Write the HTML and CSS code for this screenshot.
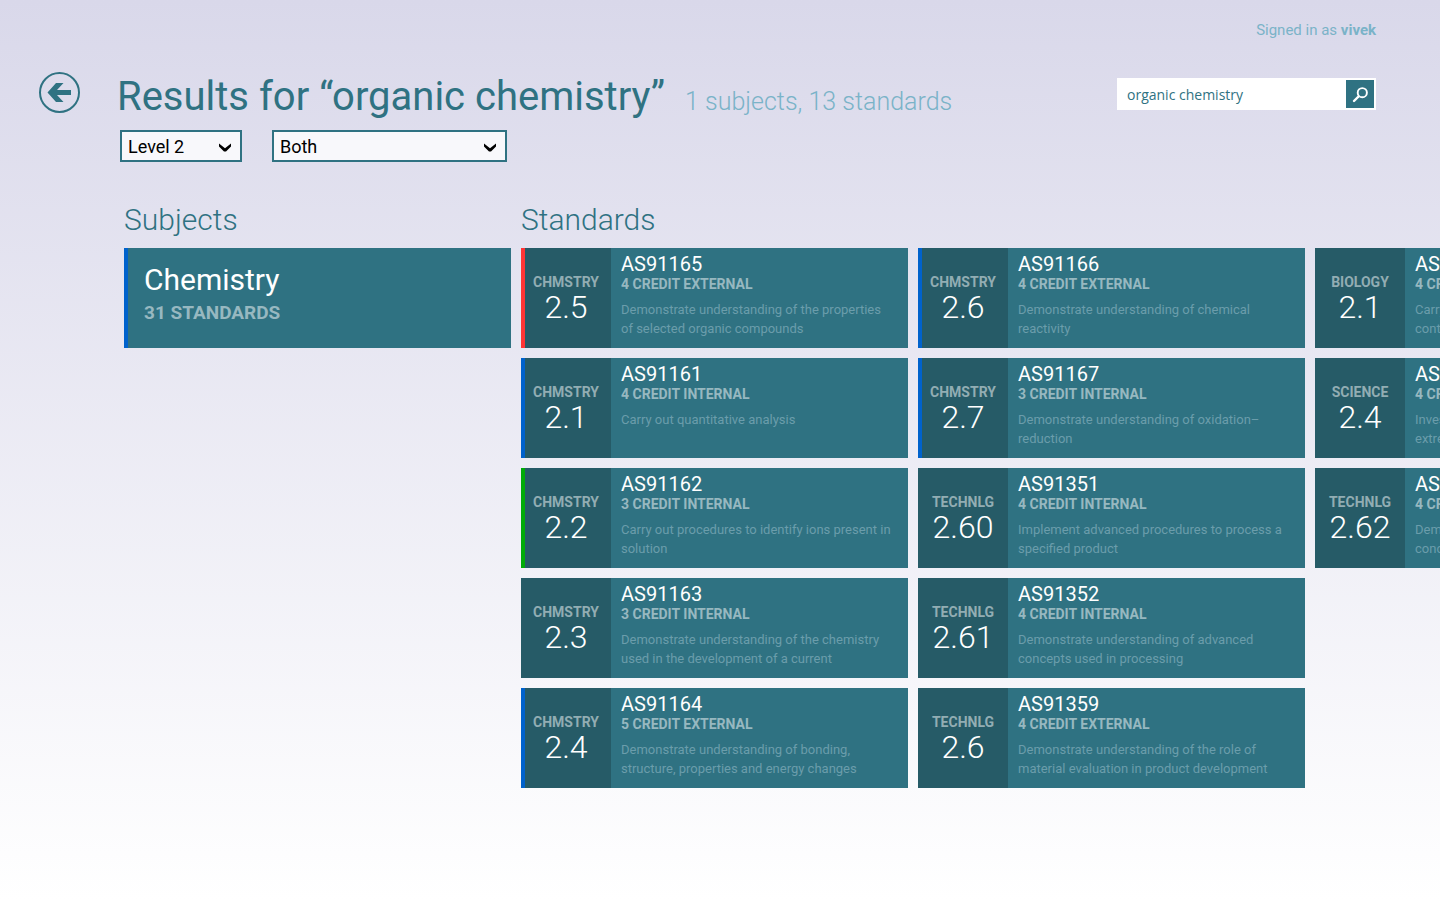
FILE: index.html
```html
<!DOCTYPE html>
<html lang="en">
<head>
<meta charset="utf-8">
<title>Results for “organic chemistry”</title>
<link rel="stylesheet" href="styles.css">
</head>
<body>
<p class="account">Signed in as <strong>vivek</strong></p>
<header class="header">
  <a class="back" href="#" aria-label="Back">
    <svg viewBox="0 0 41 41" width="41" height="41" aria-hidden="true">
      <circle cx="20.500" cy="20.500" r="19.500" fill="none" stroke="currentColor" stroke-width="2"/>
      <path d="M8.500 20.500 17 11h7.500l-6.500 7h14v5H18l6.500 7H17z" fill="currentColor"/>
    </svg>
  </a>
  <h1 class="title">Results for “organic chemistry”</h1>
  <p class="summary">1 subjects, 13 standards</p>
  <form class="search" role="search">
    <input class="search-input" type="text" aria-label="Search" value="organic chemistry">
    <button class="search-button" type="submit" aria-label="Search">
      <svg viewBox="0 0 28 28" width="28" height="28" fill="none" stroke="currentColor" aria-hidden="true">
        <circle cx="16.300" cy="12.700" r="4.600" stroke-width="1.900"/>
        <path d="M12.500 16.500 8 21" stroke-width="2.400" stroke-linecap="round"/>
      </svg>
    </button>
  </form>
</header>
<div class="filters">
  <div class="select select-level">
    <select aria-label="Level"><option>Level 1</option><option selected>Level 2</option><option>Level 3</option></select>
    <svg class="chevron" viewBox="0 0 12 9" width="12" height="9" aria-hidden="true"><path d="M0 0.500 6 5.200 12 0.500V3.500L7 8.500H5L0 3.500z"/></svg>
  </div>
  <div class="select select-type">
    <select aria-label="Assessment"><option selected>Both</option><option>Internal</option><option>External</option></select>
    <svg class="chevron" viewBox="0 0 12 9" width="12" height="9" aria-hidden="true"><path d="M0 0.500 6 5.200 12 0.500V3.500L7 8.500H5L0 3.500z"/></svg>
  </div>
</div>
<main class="results">
  <section class="group">
    <h2 class="group-title">Subjects</h2>
    <div class="tiles">
      <a class="tile subject blue" href="#"><span class="subject-name">Chemistry</span><span class="subject-count">31 STANDARDS</span></a>
    </div>
  </section>
  <section class="group">
    <h2 class="group-title">Standards</h2>
    <div class="tiles">
      <a class="tile red" href="#"><span class="code"><b>CHMSTRY</b><span class="number">2.5</span></span><span class="info"><span class="name">AS91165</span><b>4 CREDIT EXTERNAL</b><span class="text">Demonstrate understanding of the properties of selected organic compounds</span></span></a>
      <a class="tile blue" href="#"><span class="code"><b>CHMSTRY</b><span class="number">2.1</span></span><span class="info"><span class="name">AS91161</span><b>4 CREDIT INTERNAL</b><span class="text">Carry out quantitative analysis</span></span></a>
      <a class="tile green" href="#"><span class="code"><b>CHMSTRY</b><span class="number">2.2</span></span><span class="info"><span class="name">AS91162</span><b>3 CREDIT INTERNAL</b><span class="text">Carry out procedures to identify ions present in solution</span></span></a>
      <a class="tile" href="#"><span class="code"><b>CHMSTRY</b><span class="number">2.3</span></span><span class="info"><span class="name">AS91163</span><b>3 CREDIT INTERNAL</b><span class="text">Demonstrate understanding of the chemistry used in the development of a current</span></span></a>
      <a class="tile blue" href="#"><span class="code"><b>CHMSTRY</b><span class="number">2.4</span></span><span class="info"><span class="name">AS91164</span><b>5 CREDIT EXTERNAL</b><span class="text">Demonstrate understanding of bonding, structure, properties and energy changes</span></span></a>
      <a class="tile blue" href="#"><span class="code"><b>CHMSTRY</b><span class="number">2.6</span></span><span class="info"><span class="name">AS91166</span><b>4 CREDIT EXTERNAL</b><span class="text">Demonstrate understanding of chemical reactivity</span></span></a>
      <a class="tile blue" href="#"><span class="code"><b>CHMSTRY</b><span class="number">2.7</span></span><span class="info"><span class="name">AS91167</span><b>3 CREDIT INTERNAL</b><span class="text">Demonstrate understanding of oxidation–<br>reduction</span></span></a>
      <a class="tile" href="#"><span class="code"><b>TECHNLG</b><span class="number">2.60</span></span><span class="info"><span class="name">AS91351</span><b>4 CREDIT INTERNAL</b><span class="text">Implement advanced procedures to process a specified product</span></span></a>
      <a class="tile" href="#"><span class="code"><b>TECHNLG</b><span class="number">2.61</span></span><span class="info"><span class="name">AS91352</span><b>4 CREDIT INTERNAL</b><span class="text">Demonstrate understanding of advanced concepts used in processing</span></span></a>
      <a class="tile" href="#"><span class="code"><b>TECHNLG</b><span class="number">2.6</span></span><span class="info"><span class="name">AS91359</span><b>4 CREDIT EXTERNAL</b><span class="text">Demonstrate understanding of the role of material evaluation in product development</span></span></a>
      <a class="tile" href="#"><span class="code"><b>BIOLOGY</b><span class="number">2.1</span></span><span class="info"><span class="name">AS91153</span><b>4 CREDIT INTERNAL</b><span class="text">Carry out a practical investigation in a biology context</span></span></a>
      <a class="tile" href="#"><span class="code"><b>SCIENCE</b><span class="number">2.4</span></span><span class="info"><span class="name">AS91190</span><b>4 CREDIT INTERNAL</b><span class="text">Investigate how organisms survive in an<br>extreme environment</span></span></a>
      <a class="tile" href="#"><span class="code"><b>TECHNLG</b><span class="number">2.62</span></span><span class="info"><span class="name">AS91353</span><b>4 CREDIT INTERNAL</b><span class="text">Demonstrate understanding of advanced concepts used in preservation</span></span></a>
    </div>
  </section>
</main>
</body>
</html>
```
FILE: styles.css
```css
* { box-sizing: border-box; }
html { min-height: 100%; background: linear-gradient(#d9d8ea, #ffffff); }
body {
  margin: 0;
  padding-top: 18px;
  overflow-x: hidden;
  color: #2f7282;
  font-family: Roboto, "Open Sans", sans-serif;
}
a { color: inherit; text-decoration: none; }
h1, h2, p { margin: 0; font-weight: 400; }

.account {
  padding-right: 64px;
  text-align: right;
  font-size: 15px;
  line-height: 24px;
  color: #7ab3c8;
}

.header {
  display: flex;
  align-items: baseline;
  padding: 26px 64px 0 39px;
}
.back { align-self: flex-start; height: 41px; margin: 4px 37px 0 0; }
.back svg { display: block; }
.title { font-size: 40px; line-height: 58px; white-space: nowrap; }
.summary { margin-left: 20px; font-size: 25px; font-weight: 300; color: #7ab3c8; white-space: nowrap; }
.search {
  display: flex;
  align-self: flex-start;
  width: 259px;
  height: 32px;
  margin: 10px 0 0 auto;
  padding: 2px;
  background: #fff;
}
.search-input {
  flex: 1;
  min-width: 0;
  border: 0;
  padding: 0 8px;
  background: none;
  color: #2f7282;
  font: 14px "Open Sans", sans-serif;
}
.search-button { width: 28px; height: 28px; padding: 0; border: 0; background: #2f7282; color: #fff; }
.search-button svg { display: block; }

.filters { display: flex; gap: 30px; padding: 4px 0 0 120px; }
.select { display: grid; align-items: center; height: 32px; }
.select > * { grid-area: 1 / 1; }
.select-level { width: 122px; }
.select-type { width: 235px; }
.select select {
  appearance: none;
  width: 100%;
  height: 32px;
  padding: 0 6px;
  border: 2px solid #2f7282;
  border-radius: 0;
  background: #f8f8fb;
  color: #000;
  font: 18px Roboto, sans-serif;
}
.chevron { justify-self: end; margin: 3px 11px 0 0; pointer-events: none; }

.results { display: flex; gap: 10px; padding: 34px 0 0 124px; }
.group-title { font-size: 30px; line-height: 48px; font-weight: 300; }
.tiles {
  display: grid;
  grid-auto-flow: column;
  grid-template-rows: repeat(5, 100px);
  grid-auto-columns: 387px;
  gap: 10px;
  padding-top: 4px;
}
.tile { position: relative; display: flex; background: #2f7282; color: #fff; }
.tile::before { content: ""; position: absolute; inset: 0 auto 0 0; width: 4px; }
.blue::before { background: #0062cc; }
.red::before { background: #ff3535; }
.green::before { background: #00ab08; }

.subject { flex-direction: column; padding: 12px 20px; }
.subject-name { font-size: 30px; line-height: 40px; }
.subject-count { font-size: 19px; line-height: 26px; font-weight: 700; color: #97b8c0; }

.code {
  display: flex;
  flex-direction: column;
  align-items: center;
  width: 90px;
  padding-top: 24px;
  background: #265b67;
}
.code b { font-size: 14px; line-height: 20px; color: #92adb3; }
.number { font-size: 32px; line-height: 30px; font-weight: 300; }
.info { display: flex; flex: 1; flex-direction: column; min-width: 0; padding: 6px 14px 0 10px; }
.info b { font-size: 14px; line-height: 20px; color: #97b8c0; }
.name { font-size: 20px; line-height: 20px; }
.text { padding-top: 6px; font-size: 13px; line-height: 19px; color: #6b9dab; }
```
